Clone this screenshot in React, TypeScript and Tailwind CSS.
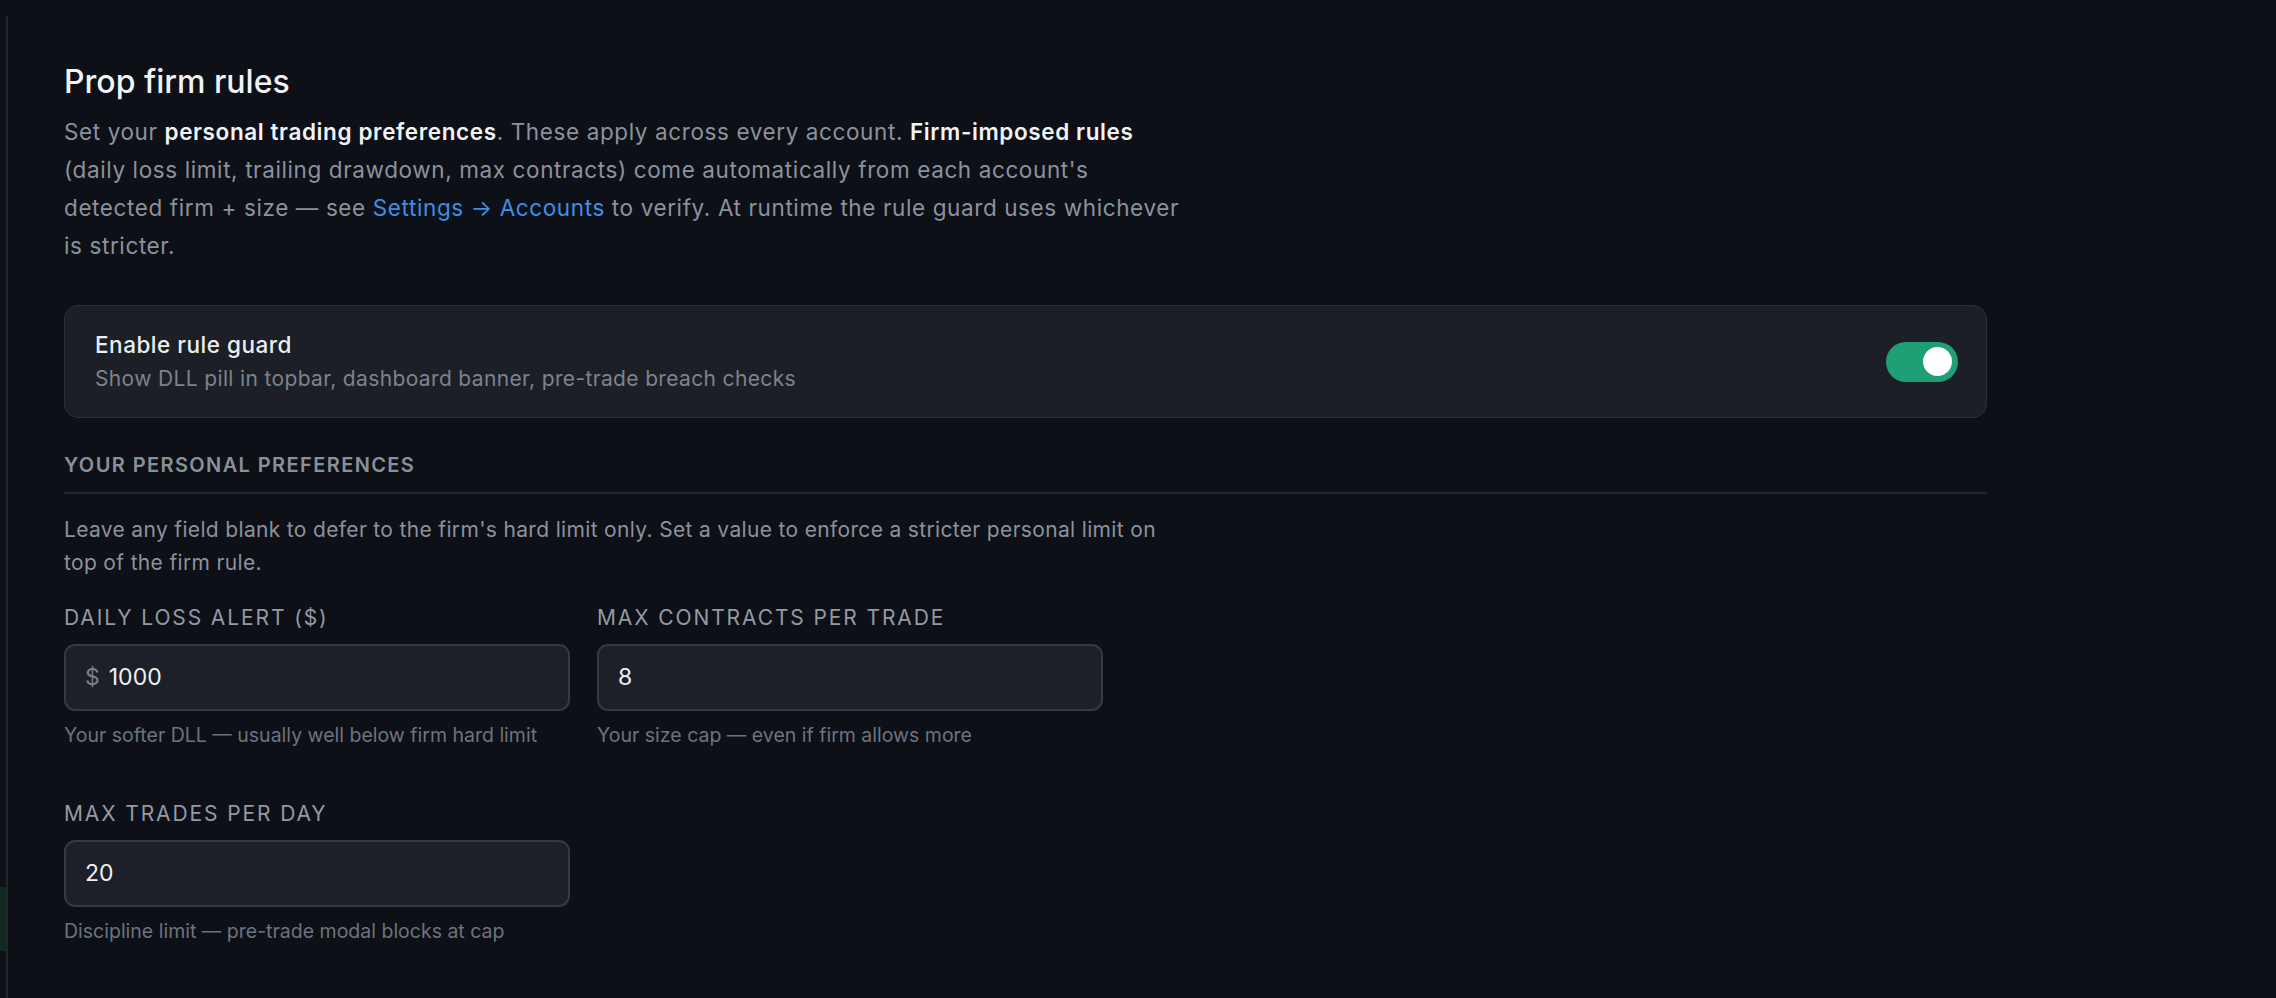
import { useState } from "react";

type Field = {
  label: string;
  value: string;
  help: string;
  prefix?: string;
};

const fields: Field[] = [
  { label: "Daily loss alert ($)", value: "1000", help: "Your softer DLL — usually well below firm hard limit", prefix: "$" },
  { label: "Max contracts per trade", value: "8", help: "Your size cap — even if firm allows more" },
  { label: "Max trades per day", value: "20", help: "Discipline limit — pre-trade modal blocks at cap" },
];

function Toggle({ on, onChange }: { on: boolean; onChange: (v: boolean) => void }) {
  return (
    <button
      type="button"
      onClick={() => onChange(!on)}
      className={`flex h-[40px] w-[72px] shrink-0 items-center rounded-full px-[6px] ${
        on ? "justify-end bg-[#1f9f75]" : "justify-start bg-[#3a3e47]"
      }`}
    >
      <span className="h-[29px] w-[29px] rounded-full bg-white" />
    </button>
  );
}

function NumberField({ field }: { field: Field }) {
  return (
    <div className="flex flex-col">
      <label className="text-[21px] leading-[30px] uppercase tracking-[0.09em] text-[#939aa4]">{field.label}</label>
      <div className="mt-[11px] flex h-[67px] items-center gap-[9px] rounded-[11px] border-2 border-[#353942] bg-[#1d2028] px-[19px]">
        {field.prefix ? <span className="text-[23px] text-[#7b818b]">{field.prefix}</span> : null}
        <input
          defaultValue={field.value}
          className="w-full bg-transparent text-[23px] text-[#eef0f3] outline-none"
        />
      </div>
      <p className="mt-[10px] text-[19.5px] leading-[28px] text-[#6d737d]">{field.help}</p>
    </div>
  );
}

export default function App() {
  const [guard, setGuard] = useState(true);

  return (
    <div className="flex min-h-screen bg-[#0d1017] font-[Inter,sans-serif]">
      {/* edge of the side rail */}
      <div className="w-[6px] shrink-0">
        <div className="mt-[887px] h-[64px] bg-[#12291f]" />
      </div>
      <div className="mt-[16px] w-[2px] shrink-0 bg-[#22252c]" />

      <main className="w-[1979px] pl-[56px] pt-[62px] pb-[50px]">
        <h1 className="text-[32px] leading-[40px] font-medium text-[#f1f3f5]">Prop firm rules</h1>
        <p className="mt-[11px] max-w-[1125px] text-[22.5px] leading-[38px] tracking-[0.027em] text-[#8c929c]">
          Set your <b className="font-semibold text-[#f1f3f5]">personal trading preferences</b>. These apply across every
          account. <b className="font-semibold text-[#f1f3f5]">Firm-imposed rules</b> (daily loss limit, trailing drawdown,
          max contracts) come automatically from each account's detected firm + size — see{" "}
          <a className="text-[#3d8fe6]">Settings → Accounts</a> to verify. At runtime the rule guard uses whichever is
          stricter.
        </p>

        <div className="mt-[40px] flex items-center justify-between rounded-[14px] border border-[#2c2f37] bg-[#1c1f26] py-[23px] pl-[30px] pr-[28px]">
          <div>
            <div className="text-[22.5px] leading-[32px] tracking-[0.023em] font-medium text-[#eceef1]">
              Enable rule guard
            </div>
            <div className="mt-[3px] text-[21px] leading-[30px] tracking-[0.017em] text-[#7d838c]">
              Show DLL pill in topbar, dashboard banner, pre-trade breach checks
            </div>
          </div>
          <Toggle on={guard} onChange={setGuard} />
        </div>

        <h2 className="mt-[33px] border-b-2 border-[#22252c] pb-[13px] text-[20px] leading-[28px] font-semibold uppercase tracking-[0.07em] text-[#8a909a]">
          Your personal preferences
        </h2>
        <p className="mt-[19px] max-w-[1105px] text-[21px] leading-[33px] tracking-[0.016em] text-[#8c929c]">
          Leave any field blank to defer to the firm's hard limit only. Set a value to enforce a stricter personal limit on
          top of the firm rule.
        </p>

        <div className="mt-[24px] grid grid-cols-[506px_506px] gap-x-[27px] gap-y-[50px]">
          {fields.map((f) => (
            <NumberField key={f.label} field={f} />
          ))}
        </div>
      </main>
    </div>
  );
}
